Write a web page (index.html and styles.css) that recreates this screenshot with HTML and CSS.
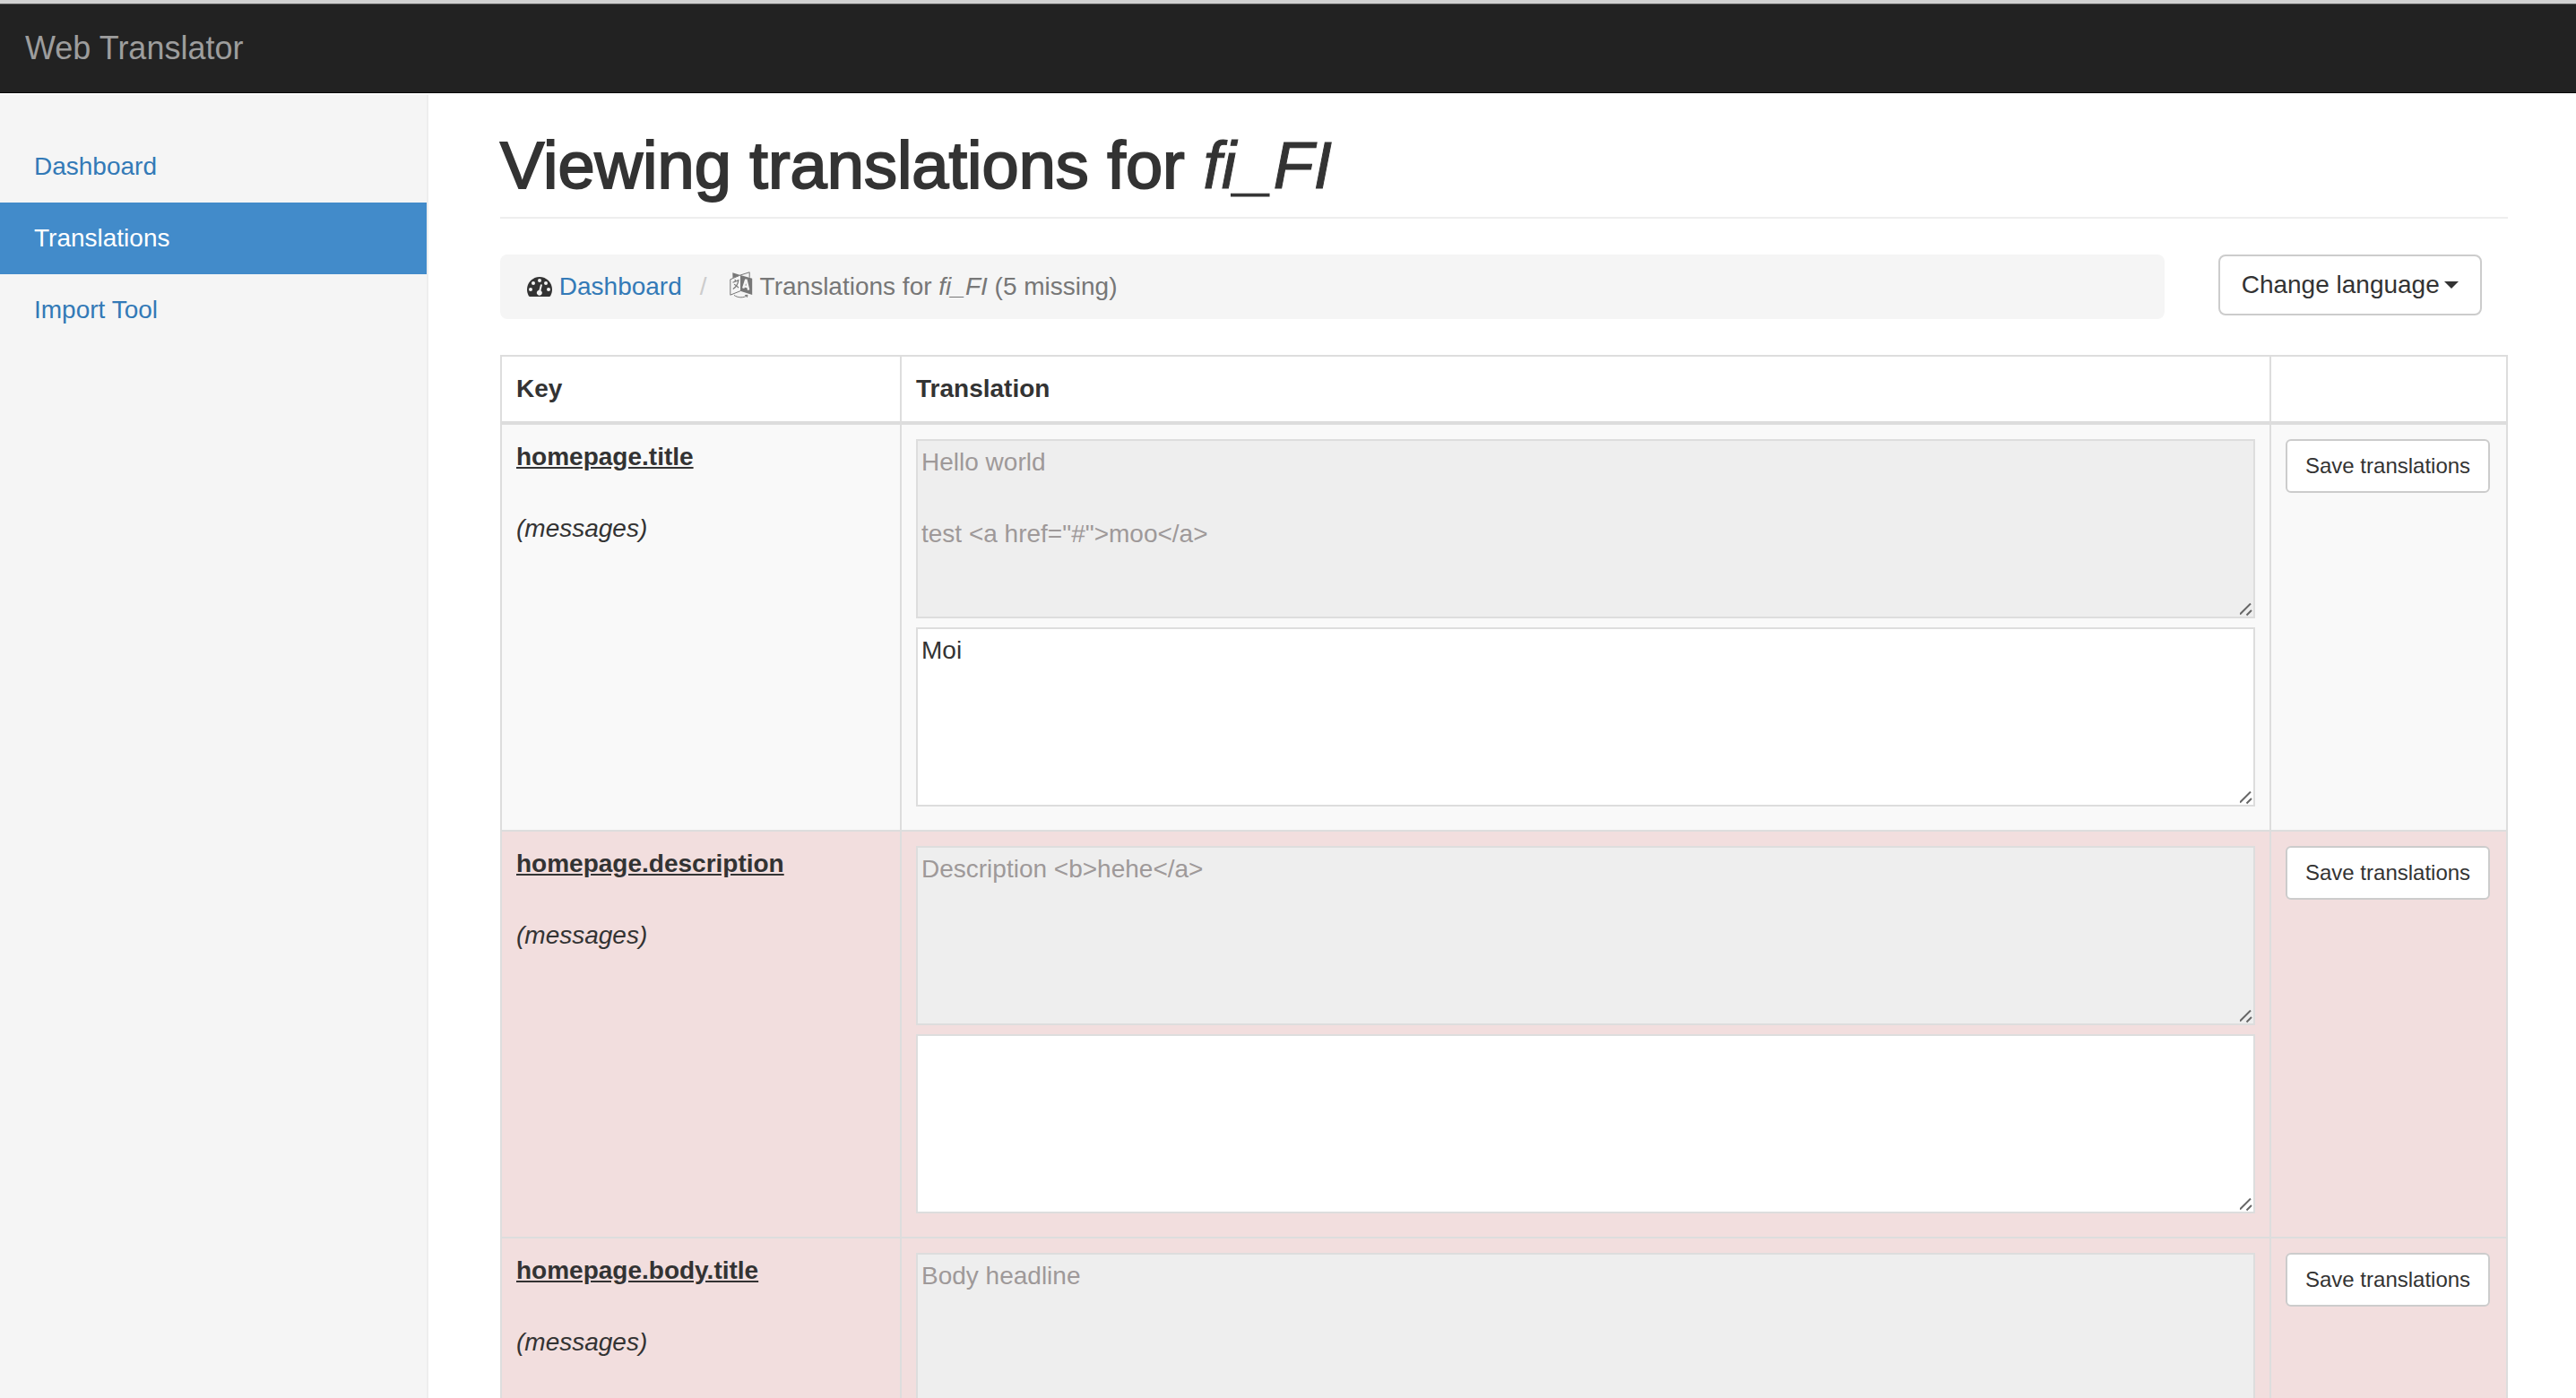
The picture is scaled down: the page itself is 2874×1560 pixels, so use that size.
FILE: index.html
```html
<!DOCTYPE html>
<html lang="en">
<head>
  <meta charset="utf-8">
  <meta name="viewport" content="width=device-width, initial-scale=1">
  <title>Web Translator</title>
  <link rel="stylesheet" href="styles.css">
</head>
<body>
  <header class="navbar">
    <a class="navbar-brand" href="#">Web Translator</a>
  </header>

  <div class="layout">
    <nav class="sidebar">
      <ul class="sidebar-nav">
        <li><a href="#">Dashboard</a></li>
        <li class="active"><a href="#" aria-current="page">Translations</a></li>
        <li><a href="#">Import Tool</a></li>
      </ul>
    </nav>

    <main class="main">
      <h1 class="page-header">Viewing translations for <em>fi_FI</em></h1>

      <div class="toolbar">
        <ol class="breadcrumb">
          <li>
            <svg class="icon-dashboard" viewBox="0 0 28 22" aria-hidden="true">
              <path fill="#333" d="M14 0C6.300 0 0 6.300 0 14c0 2.600.7 5 1.900 7.200.3.500.8.800 1.300.8h21.600c.5 0 1-.3 1.300-.8C27.300 19 28 16.600 28 14 28 6.300 21.700 0 14 0z"/>
              <g fill="#f5f5f5">
                <circle cx="4" cy="14" r="2"/>
                <circle cx="7" cy="7" r="2"/>
                <circle cx="14" cy="4" r="2"/>
                <circle cx="21" cy="7" r="2"/>
                <circle cx="24" cy="14" r="2"/>
                <path d="M16 8.200c.6.100.9.600.8 1.200l-1.400 5.800a3 3 0 1 1-2-.4l1.500-5.900c.1-.5.600-.8 1.100-.7z"/>
              </g>
            </svg>
            <a href="#">Dashboard</a>
          </li>
          <li class="active">
            <svg class="icon-language" viewBox="0 0 26 30" aria-hidden="true">
              <path fill="#777" d="M3.300 1.200 12 4 3.500 7.300zM12 4l13.200 3.800v18.200L12 21.700z"/>
              <path fill="none" stroke="#777" d="M12 4 .8 8.800v17.400L12 21.700M12 4 22.200.8v6"/>
              <path fill="none" stroke="#777" stroke-width="1.200" d="M3.500 12.300 9.800 9.800C9.300 13.500 7 17.500 3.800 19.500M6 8.800l.6 2.400M5 14.200c1.800.8 3.500 2 5 4"/>
              <path fill="none" stroke="#f5f5f5" stroke-width="2.400" d="M15.200 18.600 18 9.800h.6l2.600 10.800M16 16.200l4.400 1.200"/>
              <path fill="none" stroke="#777" d="M5 26.400c4 3 10.500 3.300 14.800.3M17.200 26.500l2.800-.2-.6 2.500"/>
            </svg>
            Translations for <em>fi_FI</em> (5 missing)
          </li>
        </ol>
        <div class="toolbar-action">
          <select class="btn btn-dropdown" aria-label="Change language">
            <option>Change language</option>
          </select>
        </div>
      </div>

      <table class="table">
        <colgroup>
          <col class="col-key">
          <col>
          <col class="col-action">
        </colgroup>
        <thead>
          <tr>
            <th scope="col">Key</th>
            <th scope="col">Translation</th>
            <td></td>
          </tr>
        </thead>
        <tbody>
          <tr>
            <td>
              <a class="key" id="key-1" href="#">homepage.title</a>
              <p class="domain"><em>(messages)</em></p>
            </td>
            <td>
              <textarea aria-labelledby="key-1" disabled>Hello world

test &lt;a href="#"&gt;moo&lt;/a&gt;</textarea>
              <textarea aria-labelledby="key-1">Moi</textarea>
            </td>
            <td><button class="btn btn-sm" type="button">Save translations</button></td>
          </tr>
          <tr class="missing">
            <td>
              <a class="key" id="key-2" href="#">homepage.description</a>
              <p class="domain"><em>(messages)</em></p>
            </td>
            <td>
              <textarea aria-labelledby="key-2" disabled>Description &lt;b&gt;hehe&lt;/a&gt;</textarea>
              <textarea aria-labelledby="key-2"></textarea>
            </td>
            <td><button class="btn btn-sm" type="button">Save translations</button></td>
          </tr>
          <tr class="missing">
            <td>
              <a class="key" id="key-3" href="#">homepage.body.title</a>
              <p class="domain"><em>(messages)</em></p>
            </td>
            <td>
              <textarea aria-labelledby="key-3" disabled>Body headline</textarea>
              <textarea aria-labelledby="key-3"></textarea>
            </td>
            <td><button class="btn btn-sm" type="button">Save translations</button></td>
          </tr>
        </tbody>
      </table>
    </main>
  </div>
</body>
</html>
```
FILE: styles.css
```css
* {
  box-sizing: border-box;
}

body {
  display: flex;
  flex-direction: column;
  height: 100vh;
  margin: 0;
  overflow: hidden;
  background: #fff;
  color: #333;
  font: 28px/40px "Liberation Sans", Arial, sans-serif;
}

a {
  color: #337ab7;
  text-decoration: none;
}

/* Top bar */
.navbar {
  display: flex;
  flex: none;
  align-items: center;
  height: 106px;
  padding: 0 28px;
  border-top: 4px solid #d2d2d2;
  border-bottom: 2px solid #fff;
  background: #222;
  box-shadow: inset 0 1px #555, inset 0 -1px #080808;
}

.navbar-brand {
  color: #9d9d9d;
  font-size: 36px;
}

/* Page columns */
.layout {
  display: flex;
  flex: 1;
  min-height: 0;
}

.sidebar {
  flex: 0 0 478px;
  padding-top: 40px;
  border-right: 2px solid #eee;
  background: #f5f5f5;
}

.sidebar-nav {
  margin: 0;
  padding: 0;
  list-style: none;
}

.sidebar-nav a {
  display: block;
  padding: 20px 38px;
}

.sidebar-nav .active a {
  background: #428bca;
  color: #fff;
}

.main {
  flex: 1;
  min-width: 0;
  padding: 40px 76px 40px 80px;
  overflow-y: auto;
  scrollbar-width: none;
}

.page-header {
  margin: 0 0 40px;
  padding-bottom: 18px;
  border-bottom: 2px solid #eee;
  font-size: 74px;
  font-weight: 500;
  line-height: 78px;
  -webkit-text-stroke: 2px #333;
}

.page-header em {
  -webkit-text-stroke: 1px #333;
}

/* Breadcrumb and language menu */
.toolbar {
  display: grid;
  grid-template-columns: 5fr 1fr;
  align-items: start;
  margin: 0 -30px 40px;
}

.breadcrumb {
  display: flex;
  margin: 0 30px;
  padding: 16px 30px;
  border-radius: 8px;
  background: #f5f5f5;
  list-style: none;
}

.breadcrumb li + li::before {
  content: "/";
  padding: 0 18px 0 20px;
  color: #ccc;
}

.breadcrumb .active {
  color: #777;
}

.icon-dashboard {
  width: 28px;
  height: 22px;
  vertical-align: -2px;
}

.icon-language {
  width: 26px;
  height: 30px;
  vertical-align: -4px;
}

.toolbar-action {
  padding: 0 30px;
}

.btn {
  border: 2px solid #ccc;
  border-radius: 8px;
  background: #fff;
  color: #333;
  font: inherit;
  white-space: nowrap;
}

.btn-dropdown {
  appearance: none;
  padding: 12px 44px 12px 24px;
  background: #fff url("data:image/svg+xml,%3Csvg xmlns='http://www.w3.org/2000/svg' width='16' height='8'%3E%3Cpath fill='%23333' d='M0 0h16L8 8z'/%3E%3C/svg%3E") no-repeat right 24px center;
}

.btn-sm {
  padding: 10px 20px;
  border-radius: 6px;
  font-size: 24px;
  line-height: 36px;
}

/* Translations table */
.table {
  width: 100%;
  border-collapse: collapse;
  table-layout: fixed;
}

.col-key {
  width: 446px;
}

.col-action {
  width: 264px;
}

.table th,
.table td {
  padding: 16px;
  border: 2px solid #ddd;
  text-align: left;
  vertical-align: top;
}

.table thead th,
.table thead td {
  border-bottom-width: 4px;
}

.table tbody tr {
  background: #f9f9f9;
}

.table tbody .missing {
  background: #f2dede;
}

.key {
  color: #333;
  font-weight: bold;
  text-decoration: underline;
}

.domain {
  margin: 40px 0 0;
}

textarea {
  display: block;
  width: 100%;
  height: 200px;
  margin-bottom: 10px;
  padding: 4px;
  border: 2px solid #ddd;
  background: #fff;
  color: #333;
  font: inherit;
  resize: both;
}

textarea:disabled {
  background: #eee;
  color: #9e9999;
}

textarea::-webkit-resizer {
  background: url("data:image/svg+xml,%3Csvg xmlns='http://www.w3.org/2000/svg' width='15' height='15'%3E%3Cpath fill='none' stroke='%23666' stroke-width='2' d='M0 12.500 12 .5M7.500 13.500 13 8'/%3E%3C/svg%3E") no-repeat right bottom;
}
```
